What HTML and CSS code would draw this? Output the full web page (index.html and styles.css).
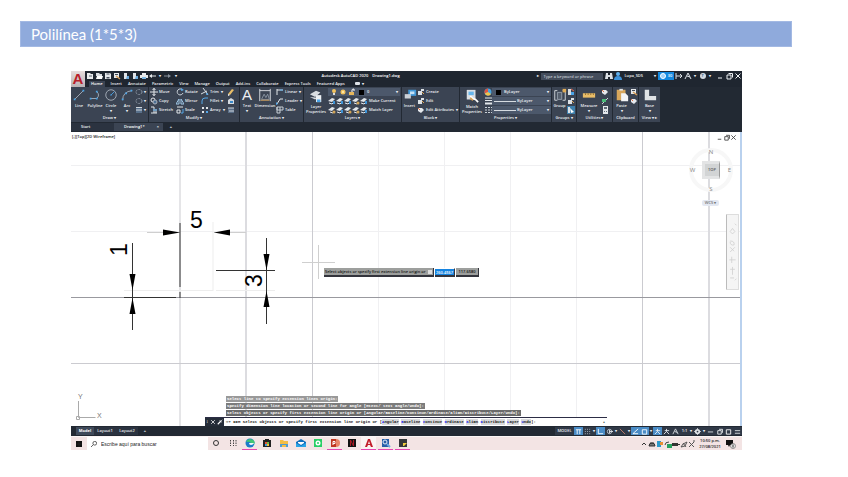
FILE: index.html
```html
<!DOCTYPE html>
<html lang="es">
<head>
<meta charset="utf-8">
<title>Polilínea</title>
<link rel="stylesheet" href="styles.css">
</head>
<body>
<svg class="defs" aria-hidden="true">
  <symbol id="file" viewBox="0 0 8 8"><path d="M1 1h3l1 1h2v5H1z" fill="#e8eaec"/><path d="M3 4h3" stroke="#59616d"/></symbol>
  <symbol id="open" viewBox="0 0 8 8"><path d="M1 1h3l1 1h2v2H1z" fill="#d8dce0"/><path d="M1 7l1-3h6L7 7z" fill="#fff"/></symbol>
  <symbol id="disk" viewBox="0 0 8 8"><path d="M1 1h5l1 1v5H1z" fill="#e4e7ea"/><path d="M2.500 1.500h3v1h-3zM2.500 5h3v1.500h-3z" fill="#444d5a"/></symbol>
  <symbol id="saveas" viewBox="0 0 8 8"><path d="M1 1h5v5H1z" fill="#e4e7ea"/><path d="M3 4l4 3" stroke="#d59c55" stroke-width="1.500"/><path d="M2 2h3v1H2z" fill="#444d5a"/></symbol>
  <symbol id="phone" viewBox="0 0 8 8"><path d="M2 1h3v6H2z" fill="#dfe2e6"/><path d="M5 4h2v3H4z" fill="#6aa9dd"/></symbol>
  <symbol id="print" viewBox="0 0 8 8"><path d="M2 1h4v6H2zM0 3h8v3H0z" fill="#e8eaec"/><path d="M2 5h4v2H2z" fill="#7db7e3"/></symbol>
  <symbol id="undo" viewBox="0 0 8 8"><path d="M0 4l3-2v1.500h4v1H3V6z" fill="#e8eaec"/></symbol>
  <symbol id="redo" viewBox="0 0 8 8"><path d="M8 4L5 2v1.500H1v1h4V6z" fill="#87909b"/></symbol>
  <symbol id="line" viewBox="0 0 16 16"><path d="M3 13L13 3" stroke="#aab2bd"/><path d="M2 13h2M12 3h2" stroke="#4aa3e6" stroke-width="2"/></symbol>
  <symbol id="pline" viewBox="0 0 16 16"><path d="M3 12h7q4-4 0-8" fill="none" stroke="#aab2bd"/><path d="M2 12h2M9 12h2M9 4h2" stroke="#4aa3e6" stroke-width="2"/></symbol>
  <symbol id="circle" viewBox="0 0 16 16"><circle cx="8" cy="8" r="6" fill="none" stroke="#aab2bd"/><path d="M8 8l4-4M7 8h2" stroke="#4aa3e6"/></symbol>
  <symbol id="arc" viewBox="0 0 16 16"><path d="M3 14Q3 4 14 3" fill="none" stroke="#aab2bd"/><path d="M2 13h2M6 6h2M12 3h2" stroke="#4aa3e6" stroke-width="2"/></symbol>
  <symbol id="ellipse" viewBox="0 0 8 8"><ellipse cx="4" cy="4" rx="3" ry="2.500" fill="none" stroke="#8e98a5" stroke-dasharray="2 1"/></symbol>
  <symbol id="hatch" viewBox="0 0 8 8"><path d="M1 1h6v6H1z" fill="#58708b"/><path d="M1 1.500h6M1 4h6" stroke="#cfd5db"/></symbol>
  <symbol id="move" viewBox="0 0 8 8"><path d="M4 0v8M0 4h8M2.500 2L4 .500 5.500 2M2.500 6L4 7.500 5.500 6" fill="none" stroke="#e3e7eb"/></symbol>
  <symbol id="copy" viewBox="0 0 8 8"><circle cx="3" cy="3" r="2" fill="none" stroke="#e3e7eb"/><circle cx="5" cy="5" r="2" fill="#4c6f92" stroke="#aab2bd"/></symbol>
  <symbol id="stretch" viewBox="0 0 8 8"><path d="M1 1h3v6M1 7h6M6 3v4" fill="none" stroke="#e3e7eb"/><path d="M3 4h4" stroke="#55a7e8"/></symbol>
  <symbol id="rotate" viewBox="0 0 8 8"><path d="M6.500 2A3 3 0 1 0 7 5" fill="none" stroke="#cbd2d9"/><path d="M5 0l3 2-3 1z" fill="#55a7e8"/></symbol>
  <symbol id="mirror" viewBox="0 0 8 8"><path d="M0 7l3-5v5zM8 7L5 2v5z" fill="none" stroke="#9fc6e6"/></symbol>
  <symbol id="scale" viewBox="0 0 8 8"><path d="M1 1h6M1 4h3v3H1z" fill="none" stroke="#e3e7eb"/><path d="M5 7h2V3" fill="none" stroke="#55a7e8"/></symbol>
  <symbol id="trim" viewBox="0 0 8 8"><path d="M2 0l3 4 2 3M0 6l6-3" fill="none" stroke="#dce1e6"/><circle cx="6" cy="6" r="1" fill="#55a7e8"/></symbol>
  <symbol id="wrench" viewBox="0 0 8 8"><path d="M1 7l4-4" stroke="#fff" stroke-width="1.500"/><path d="M7 1L5.500 2.500M4 1.500Q3.500 4 6.500 4" fill="none" stroke="#fff"/></symbol>
  <symbol id="fillet" viewBox="0 0 8 8"><path d="M1 7V4q0-3 3-3h3" fill="none" stroke="#55a7e8"/></symbol>
  <symbol id="array" viewBox="0 0 8 8"><path d="M1 1h2v2H1zM5 1h2v2H5zM1 5h2v2H1z" fill="#e3e7eb"/><path d="M5 5h2v2H5z" fill="#55a7e8"/></symbol>
  <symbol id="erase" viewBox="0 0 8 8"><path d="M1 6l4-5 2 1-4 5z" fill="#e8be68"/><path d="M1 6l2 1-2 1z" fill="#fff"/></symbol>
  <symbol id="explode" viewBox="0 0 8 8"><path d="M1 3l3-2 3 2v4H1z" fill="#d4dae0"/><path d="M3 4h3v2H3z" fill="#3989c9"/></symbol>
  <symbol id="offset" viewBox="0 0 8 8"><path d="M1 2h6v5H1z" fill="#5a6f88"/><path d="M1 2h6M2 5h5" stroke="#cdd4db"/></symbol>
  <symbol id="dim" viewBox="0 0 16 16"><path d="M2 1v14M14 1v14M2 3h12" fill="none" stroke="#e3e7eb"/><path d="M4 13l3-6 2 4 2-4 2 6z" fill="none" stroke="#8b97a5"/><path d="M3 14h10" stroke="#d9a760"/></symbol>
  <symbol id="linear" viewBox="0 0 8 8"><path d="M1 1v6M1 2h6" stroke="#e3e7eb"/><path d="M4 2h3" stroke="#55a7e8"/></symbol>
  <symbol id="leader" viewBox="0 0 8 8"><path d="M1 7l3-5h3" fill="none" stroke="#e3e7eb"/><path d="M0 8V5l2 2z" fill="#55a7e8"/></symbol>
  <symbol id="table" viewBox="0 0 8 8"><path d="M1 1h6v3H1zM1 1v6h3V1" fill="none" stroke="#c8cfd7"/></symbol>
  <symbol id="layers" viewBox="0 0 16 16"><path d="M1 6l7-4 5 2-6 5zM1 9l6 3 3-2" fill="#d9dde1"/><path d="M8 7h6v8H8z" fill="#edf1f4"/><path d="M9 12h4v3H9z" fill="#4aa3e6"/></symbol>
  <symbol id="lay" viewBox="0 0 8 8"><path d="M0 4l4-3 3 1-3 3z" fill="#e3e7eb"/><path d="M1 6l3 1 2-2" fill="none" stroke="#e3e7eb"/><path d="M5 4h2v3H5z" fill="#3f95d8"/></symbol>
  <symbol id="lay2" viewBox="0 0 8 8"><path d="M0 4l4-3 3 1-3 3z" fill="#e3e7eb"/><path d="M2 6l3 1" stroke="#e3e7eb"/><circle cx="6" cy="6" r="1.500" fill="#d3a557"/></symbol>
  <symbol id="bulb" viewBox="0 0 8 8"><circle cx="4" cy="3" r="2" fill="#f3c35d"/><path d="M3 5h2v2H3z" fill="#ddd"/></symbol>
  <symbol id="sun" viewBox="0 0 8 8"><circle cx="4" cy="4" r="2.500" fill="#f3c35d"/><circle cx="4" cy="4" r="1" fill="#fff1bb"/></symbol>
  <symbol id="lock" viewBox="0 0 8 8"><path d="M1 4h5v3H1z" fill="#e6b75c"/><path d="M4 4V2q0-1 2-1v2" fill="none" stroke="#fff"/></symbol>
  <symbol id="insert" viewBox="0 0 16 16"><path d="M6 2h9v7H6z" fill="#4297d6"/><path d="M2 7h7v5H2z" fill="#cbd1d8"/><path d="M8 4h5v3H8z" fill="#c6e2f6"/></symbol>
  <symbol id="create" viewBox="0 0 8 8"><path d="M1 3h4v4H1zM4 1h3v2H4z" fill="#dce1e6"/><path d="M5 4l2 2" stroke="#e2a44f"/></symbol>
  <symbol id="tag" viewBox="0 0 8 8"><path d="M1 2h4l2 2-3 3-3-2z" fill="#e6e9ed"/><path d="M1 2l2 2" stroke="#df7348"/></symbol>
  <symbol id="match" viewBox="0 0 16 16"><path d="M2 1h10v11H2z" fill="#dadfe4"/><path d="M4 3h6v4H4z" fill="#65b5ec"/><path d="M6 8l3 3 3 1 3 3" fill="none" stroke="#fff" stroke-width="2"/><path d="M6 10l3 3" stroke="#d99f4e" stroke-width="2"/></symbol>
  <symbol id="wheel" viewBox="0 0 8 8"><circle cx="4" cy="4" r="3.500" fill="#49a3df"/><path d="M4 4V.500A3.500 3.500 0 0 0 .800 5.500z" fill="#e05540"/><path d="M4 4L.800 5.500A3.500 3.500 0 0 0 7 6z" fill="#f1c34b"/></symbol>
  <symbol id="weights" viewBox="0 0 8 8"><path d="M1 1h7M1 3.500h7" stroke="#e3e7eb"/><path d="M1 6.500h7" stroke="#e3e7eb" stroke-width="2"/></symbol>
  <symbol id="dashes" viewBox="0 0 8 8"><path d="M1 1.500h7M1 4h7M1 6.500h7" stroke="#cbd2d9" stroke-dasharray="2 1"/></symbol>
  <symbol id="group" viewBox="0 0 16 16"><path d="M5 3H2v11h3M11 3h3v11h-3" fill="none" stroke="#dce1e6"/><path d="M5 5h5v8H5z" fill="#56606e" stroke="#9ca6b2"/><path d="M11 1h4v4h-4z" fill="#e0ac57"/></symbol>
  <symbol id="ungroup" viewBox="0 0 8 8"><path d="M1 1h3v6H1z" fill="#d8dde2"/><path d="M4 4h3v3H4z" fill="#4aa3e6"/><path d="M4 1l3 2" stroke="#e2674c"/></symbol>
  <symbol id="select" viewBox="0 0 8 8"><path d="M0 0h8v8H0z" fill="#3e7fab"/><path d="M1 1h2v6H1z" fill="#dce1e6"/><path d="M3 2l4 4-3 1z" fill="#fff"/></symbol>
  <symbol id="ruler" viewBox="0 0 16 16"><path d="M1 6h14v5H1z" fill="#e9bd67"/><path d="M4 6v2M7 6v2M10 6v2M13 6v2" stroke="#8b6a30"/></symbol>
  <symbol id="calc" viewBox="0 0 8 8"><path d="M2 0h5v8H2z" fill="#e3e7eb"/><path d="M3 1h3v2H3zM3 5h1v1H3zM5 5h1v1H5z" fill="#606a77"/></symbol>
  <symbol id="point" viewBox="0 0 8 8"><path d="M1 7l6-6" stroke="#cfd6dd"/><path d="M1 2h4v3H1z" fill="#4abb79"/></symbol>
  <symbol id="paste" viewBox="0 0 16 16"><path d="M2 2h10v12H2z" fill="#d7a65b"/><path d="M5 1h4v2H5z" fill="#dfe3e7"/><path d="M7 6h5l3 3v6H7z" fill="#f3f4f5"/></symbol>
  <symbol id="base" viewBox="0 0 16 16"><path d="M2 2h5v7h8v5H2z" fill="#e0e3e6"/></symbol>
  <symbol id="binoc" viewBox="0 0 8 8"><path d="M1 1h2v2h2V1h2l1 6H5V5H3v2H0z" fill="#dce1e6"/></symbol>
  <symbol id="user" viewBox="0 0 8 8"><circle cx="4" cy="2" r="2" fill="#5fb0ee"/><path d="M0 8q0-4 4-4t4 4z" fill="#3b92db"/></symbol>
  <symbol id="cart" viewBox="0 0 8 8"><path d="M1 1v6M1 4h5M5 2l2 2-2 2" fill="none" stroke="#dce1e6"/></symbol>
  <symbol id="a360" viewBox="0 0 8 8"><path d="M1 7l3-6 3 6M3 4l3 1" fill="none" stroke="#dce1e6"/></symbol>
  <symbol id="min" viewBox="0 0 8 8"><path d="M2 6h4" stroke="currentColor"/></symbol>
  <symbol id="max" viewBox="0 0 8 8"><path d="M2 3h4v4H2zM3.500 1.500h4v4" fill="none" stroke="currentColor"/></symbol>
  <symbol id="close" viewBox="0 0 8 8"><path d="M1.500 1.500l5 5M6.500 1.500l-5 5" stroke="currentColor"/></symbol>
  <symbol id="bars" viewBox="0 0 8 8"><path d="M1 2h6M2.500 2v5M5.500 2v5" stroke="#fff"/></symbol>
  <symbol id="dots" viewBox="0 0 8 8"><path d="M1 1.500h7M1 4h7M1 6.500h7" stroke="#b6bec7" stroke-dasharray="1 1.500"/></symbol>
  <symbol id="ortho" viewBox="0 0 8 8"><path d="M1.500 1v5.500H7" fill="none" stroke="#fff"/></symbol>
  <symbol id="polar" viewBox="0 0 8 8"><circle cx="4" cy="4" r="2.500" fill="none" stroke="#c3cad2"/><path d="M4 4h4M4 2v4" stroke="#e3e7eb"/></symbol>
  <symbol id="iso" viewBox="0 0 8 8"><path d="M1 1l6 6" stroke="#c8816f"/></symbol>
  <symbol id="angle" viewBox="0 0 8 8"><path d="M7 1L1 6.500h6" fill="none" stroke="#fff"/></symbol>
  <symbol id="snap" viewBox="0 0 8 8"><path d="M1.500 2h5v5h-5z" fill="none" stroke="#fff"/></symbol>
  <symbol id="person" viewBox="0 0 8 8"><path d="M4 1v3L1 7M4 4l3 3M2 3h5" fill="none" stroke="#e8ecf0"/></symbol>
  <symbol id="gear" viewBox="0 0 8 8"><circle cx="4" cy="4" r="2" fill="none" stroke="#dfe3e7" stroke-width="2"/><path d="M4 0v1M4 7v1M0 4h1M7 4h1" stroke="#dfe3e7"/></symbol>
  <symbol id="burger" viewBox="0 0 8 8"><path d="M1 3h6M1 6h6" stroke="#dfe3e7"/></symbol>
  <symbol id="dash" viewBox="0 0 8 8"><path d="M1 4.500h6" stroke="#dfe3e7"/></symbol>
  <symbol id="search" viewBox="0 0 8 8"><circle cx="5" cy="3" r="2.500" fill="none" stroke="#333"/><path d="M3 5L0 8" stroke="#333"/></symbol>
</svg>

<main class="slide">
  <h1 class="slide-title">Polilínea (1*5*3)</h1>

  <section class="app" aria-label="Autodesk AutoCAD 2020">
    <header class="top">
      <button class="logo" aria-label="AutoCAD">A</button>
      <div class="top-rows">
        <div class="titlebar">
          <div class="quick">
            <button aria-label="New"><svg><use href="#file"/></svg></button>
            <button aria-label="Open"><svg><use href="#open"/></svg></button>
            <button aria-label="Save"><svg><use href="#disk"/></svg></button>
            <button aria-label="Save as"><svg><use href="#saveas"/></svg></button>
            <button aria-label="Open from mobile"><svg><use href="#phone"/></svg></button>
            <button aria-label="Save to mobile"><svg><use href="#phone"/></svg></button>
            <button aria-label="Plot"><svg><use href="#print"/></svg></button>
            <button aria-label="Undo"><svg><use href="#undo"/></svg></button>
            <span class="car">▾</span>
            <button aria-label="Redo"><svg><use href="#redo"/></svg></button>
            <button aria-label="Customize">▾</button>
          </div>
          <p class="doc"><span>Autodesk AutoCAD 2020</span><span>Drawing1.dwg</span></p>
          <div class="account">
            <span class="car">▸</span>
            <input class="find" type="text" aria-label="Search" placeholder="Type a keyword or phrase">
            <button aria-label="Find"><svg><use href="#binoc"/></svg></button>
            <button class="user"><svg><use href="#user"/></svg>Lupa_SDS<span class="car">▾</span></button>
            <button class="trial" aria-label="Trial days"><i></i>30</button>
            <button aria-label="Store"><svg><use href="#cart"/></svg></button>
            <button aria-label="A360"><svg><use href="#a360"/></svg></button>
            <span class="car">▾</span>
            <button class="help" aria-label="Help"><b>?</b></button>
            <span class="car">▾</span>
            <div class="win">
              <button aria-label="Minimize"><svg><use href="#min"/></svg></button>
              <button aria-label="Restore"><svg><use href="#max"/></svg></button>
              <button aria-label="Close"><svg><use href="#close"/></svg></button>
            </div>
          </div>
        </div>
        <nav class="menu">
          <a class="on" href="#">Home</a><a href="#">Insert</a><a href="#">Annotate</a><a href="#">Parametric</a><a href="#">View</a><a href="#">Manage</a><a href="#">Output</a><a href="#">Add-ins</a><a href="#">Collaborate</a><a href="#">Express Tools</a><a href="#">Featured Apps</a><a href="#" aria-label="Ribbon display"><i class="pill"></i>▾</a>
        </nav>
      </div>
    </header>

    <div class="ribbon">
      <section class="panel draw">
        <div class="tools">
          <button class="big"><svg><use href="#line"/></svg>Line</button>
          <button class="big"><svg><use href="#pline"/></svg>Polyline</button>
          <button class="big"><svg><use href="#circle"/></svg>Circle<span>▾</span></button>
          <button class="big"><svg><use href="#arc"/></svg>Arc<span>▾</span></button>
          <div class="stack">
            <button aria-label="Rectangle"><svg><use href="#ellipse"/></svg>▾</button>
            <button aria-label="Ellipse"><svg><use href="#ellipse"/></svg>▾</button>
            <button aria-label="Hatch"><svg><use href="#hatch"/></svg>▾</button>
          </div>
        </div>
        <h2>Draw ▾</h2>
      </section>
      <section class="panel modify">
        <div class="tools">
          <div class="stack">
            <button><svg><use href="#move"/></svg>Move</button>
            <button><svg><use href="#copy"/></svg>Copy</button>
            <button><svg><use href="#stretch"/></svg>Stretch</button>
          </div>
          <div class="stack">
            <button><svg><use href="#rotate"/></svg>Rotate</button>
            <button><svg><use href="#mirror"/></svg>Mirror</button>
            <button><svg><use href="#scale"/></svg>Scale</button>
          </div>
          <div class="stack">
            <button><svg><use href="#trim"/></svg>Trim <span>▾</span></button>
            <button><svg><use href="#fillet"/></svg>Fillet <span>▾</span></button>
            <button><svg><use href="#array"/></svg>Array <span>▾</span></button>
          </div>
          <div class="stack">
            <button aria-label="Erase"><svg><use href="#erase"/></svg></button>
            <button aria-label="Explode"><svg><use href="#explode"/></svg></button>
            <button aria-label="Offset"><svg><use href="#offset"/></svg></button>
          </div>
        </div>
        <h2>Modify ▾</h2>
      </section>
      <section class="panel annotation">
        <div class="tools">
          <button class="big"><b class="glyph">A</b>Text<span>▾</span></button>
          <button class="big"><svg><use href="#dim"/></svg>Dimension</button>
          <div class="stack">
            <button><svg><use href="#linear"/></svg>Linear <span>▾</span></button>
            <button><svg><use href="#leader"/></svg>Leader <span>▾</span></button>
            <button><svg><use href="#table"/></svg>Table</button>
          </div>
        </div>
        <h2>Annotation ▾</h2>
      </section>
      <section class="panel layers">
        <div class="tools">
          <button class="big two"><svg><use href="#layers"/></svg>Layer<br>Properties</button>
          <div class="stack">
            <button class="combo"><svg><use href="#bulb"/></svg><svg><use href="#sun"/></svg><svg><use href="#lock"/></svg><i class="swatch"></i>0<span>▾</span></button>
            <div class="row">
              <button aria-label="Off"><svg><use href="#lay"/></svg></button><button aria-label="Isolate"><svg><use href="#lay"/></svg></button><button aria-label="Freeze"><svg><use href="#lay"/></svg></button><button aria-label="Lock"><svg><use href="#lay2"/></svg></button><button><svg><use href="#lay"/></svg>Make Current</button>
            </div>
            <div class="row">
              <button aria-label="On"><svg><use href="#lay2"/></svg></button><button aria-label="Unisolate"><svg><use href="#lay"/></svg></button><button aria-label="Thaw"><svg><use href="#lay2"/></svg></button><button aria-label="Unlock"><svg><use href="#lay2"/></svg></button><button><svg><use href="#lay"/></svg>Match Layer</button>
            </div>
          </div>
        </div>
        <h2>Layers ▾</h2>
      </section>
      <section class="panel block">
        <div class="tools">
          <button class="big"><svg><use href="#insert"/></svg>Insert</button>
          <div class="stack">
            <button><svg><use href="#create"/></svg>Create</button>
            <button><svg><use href="#create"/></svg>Edit</button>
            <button><svg><use href="#tag"/></svg>Edit Attributes <span>▾</span></button>
          </div>
        </div>
        <h2>Block ▾</h2>
      </section>
      <section class="panel properties">
        <div class="tools">
          <button class="big two"><svg><use href="#match"/></svg>Match<br>Properties</button>
          <div class="stack">
            <svg><use href="#wheel"/></svg>
            <svg><use href="#weights"/></svg>
            <svg><use href="#dashes"/></svg>
          </div>
          <div class="stack wide">
            <button class="combo"><i class="swatch"></i>ByLayer<span>▾</span></button>
            <button class="combo"><i class="rule"></i>ByLayer<span>▾</span></button>
            <button class="combo"><i class="rule"></i>ByLayer<span>▾</span></button>
          </div>
        </div>
        <h2>Properties ▾</h2>
      </section>
      <section class="panel groups">
        <div class="tools">
          <button class="big"><svg><use href="#group"/></svg>Group</button>
          <div class="stack">
            <button aria-label="Ungroup"><svg><use href="#ungroup"/></svg></button>
            <button aria-label="Group edit"><svg><use href="#create"/></svg></button>
            <button aria-label="Group selection"><svg><use href="#select"/></svg></button>
          </div>
        </div>
        <h2>Groups ▾</h2>
      </section>
      <section class="panel utilities">
        <div class="tools">
          <button class="big"><svg><use href="#ruler"/></svg>Measure<span>▾</span></button>
          <div class="stack">
            <button aria-label="Quick select"><svg><use href="#tag"/></svg></button>
            <button aria-label="Point"><svg><use href="#point"/></svg></button>
            <button aria-label="Calculator"><svg><use href="#calc"/></svg></button>
          </div>
        </div>
        <h2>Utilities ▾</h2>
      </section>
      <section class="panel clipboard">
        <div class="tools">
          <button class="big"><svg><use href="#paste"/></svg>Paste<span>▾</span></button>
          <div class="stack">
            <button aria-label="Cut"><svg><use href="#saveas"/></svg></button>
            <button aria-label="Copy clip"><svg><use href="#tag"/></svg></button>
          </div>
        </div>
        <h2>Clipboard</h2>
      </section>
      <section class="panel view">
        <div class="tools">
          <button class="big"><svg><use href="#base"/></svg>Base<span>▾</span></button>
        </div>
        <h2>View ▾ ▸</h2>
      </section>
    </div>

    <nav class="files">
      <a href="#">Start</a>
      <a class="on" href="#">Drawing1*<span>×</span></a>
      <button aria-label="New drawing">+</button>
    </nav>

    <div class="canvas">
      <svg class="drawing" viewBox="71 132 671 294" preserveAspectRatio="xMinYMin slice" role="img" aria-label="Drawing">
        <g class="grid">
          <path class="faint" d="M378.500 132v294M444.500 132v294M510.500 132v294M576.500 132v294M71 165.500h671M71 231.500h671"/>
          <path class="mid" d="M246 132v294M709 132v294"/>
          <path class="firm" d="M180 132v294M312.500 132v294M642.500 132v294M71 363.500h671"/>
          <path class="axis" d="M71 297.500h671"/>
        </g>
        <path class="ghost" d="M213 222v69M124 290.500h89M216 290.500h59"/>
        <path class="soft" d="M147 232.500h33M214 232.500h32M302 262.500h33M318.500 245v34"/>
        <path class="ink" d="M180 223v64M180 292v6M124 297.500h52M132.500 243v87M216 270.500h59M266.500 238v86"/>
        <path class="arrow" d="M180 232.500l-17-3v6zM214 232.500l16-3v6zM132.500 290l-3-16h6zM132.500 298l-3 16h6zM266.500 270l-3-16h6zM266.500 291l-3 16h6z"/>
        <text class="dimension" x="190" y="228">5</text>
        <text class="dimension" transform="translate(127 256) rotate(-90)">1</text>
        <text class="dimension" transform="translate(262 287) rotate(-90)">3</text>
        <path class="ucs" d="M78.500 401v16.500h17M76.500 416.500h3v3h-3z"/>
        <text class="axis-name" x="78" y="399">Y</text>
        <text class="axis-name" x="97" y="418">X</text>
      </svg>
      <p class="viewport">[-][Top][2D Wireframe]</p>
      <div class="viewport-win">
        <button aria-label="Minimize drawing"><svg><use href="#min"/></svg></button>
        <button aria-label="Restore drawing"><svg><use href="#max"/></svg></button>
        <button aria-label="Close drawing"><svg><use href="#close"/></svg></button>
      </div>
      <div class="cube">
        <span class="n">N</span><span class="w">W</span><button>TOP</button><span class="e">E</span><span class="s">S</span>
      </div>
      <button class="wcs">WCS ▾</button>
      <div class="navbar">
        <svg viewBox="0 0 14 76"><path d="M10 2l2 2M4 12l3-4 3 4-3 3zM4 24q6 0 5 5-5 1-5-4M4 38l6-6M4 32l5 5M6 44v8M3 48h8M4 60h6M7 57v10M4 71h5M10 74l2-2" /></svg>
      </div>
      <div class="prompt">
        <span class="ask">Select objects or specify first extension line origin or<i></i></span>
        <input type="text" aria-label="X" value="260.4567">
        <span class="second">117.6580</span>
      </div>
      <div class="history">
        <p>Select line to specify extension lines origin:</p>
        <p>Specify dimension line location or second line for angle [Mtext/ text angle/Undo]:</p>
        <p>Select objects or specify first extension line origin or [Angular/Baseline/Continue/Ordinate/aliGn/Distribute/Layer/Undo]:</p>
      </div>
      <div class="command">
        <div class="grip"><span>⁞</span><svg><use href="#close"/></svg><svg><use href="#wrench"/></svg></div>
        <p>⌨▾ DIM Select objects or specify first extension line origin or [<a href="#">Angular</a> <a href="#">Baseline</a> <a href="#">Continue</a> <a href="#">Ordinate</a> <a href="#">aliGn</a> <a href="#">Distribute</a> <a href="#">Layer</a> <a href="#">Undo</a>]:</p>
        <button aria-label="Expand">▴</button>
      </div>
    </div>

    <footer class="status">
      <nav class="layouts"><a class="on" href="#">Model</a><a href="#">Layout1</a><a href="#">Layout2</a><button aria-label="New layout">+</button></nav>
      <div class="modes">
        <button class="word">MODEL</button>
        <button class="lit" aria-label="Grid"><svg><use href="#bars"/></svg></button>
        <button aria-label="Snap"><svg><use href="#dots"/></svg></button><span class="car">▾</span>
        <button class="lit" aria-label="Ortho"><svg><use href="#ortho"/></svg></button>
        <button aria-label="Polar"><svg><use href="#polar"/></svg></button><span class="car">▾</span>
        <button aria-label="Isodraft"><svg><use href="#iso"/></svg></button><span class="car">▾</span>
        <button class="lit" aria-label="Tracking"><svg><use href="#angle"/></svg></button>
        <button class="lit" aria-label="Object snap"><svg><use href="#snap"/></svg></button><span class="car">▾</span>
        <button class="lit" aria-label="Annotation visibility"><svg><use href="#person"/></svg></button>
        <button aria-label="Auto scale"><svg><use href="#person"/></svg></button>
        <button aria-label="Scale"><svg><use href="#a360"/></svg></button>
        <button>1:1</button><span class="car">▾</span>
        <button aria-label="Workspace"><svg><use href="#gear"/></svg></button><span class="car">▾</span>
        <button aria-label="Monitor"><svg><use href="#dash"/></svg></button>
        <button aria-label="Isolate objects"><svg><use href="#max"/></svg></button>
        <button aria-label="Clean screen"><svg><use href="#snap"/></svg></button>
        <button aria-label="Customization"><svg><use href="#burger"/></svg></button>
      </div>
    </footer>

    <div class="taskbar">
      <button class="start" aria-label="Inicio"><svg viewBox="0 0 8 8"><path d="M1 1h6v6H1z" fill="#111"/><path d="M4 1v6M1 4h6" stroke="#333" stroke-width=".4"/></svg></button>
      <label class="search"><svg><use href="#search"/></svg><input type="text" placeholder="Escribe aquí para buscar"></label>
      <div class="apps">
        <button aria-label="Cortana"><svg viewBox="0 0 10 10"><circle cx="5" cy="5" r="2.500" fill="none" stroke="#333"/></svg></button>
        <button aria-label="Vista de tareas"><svg viewBox="0 0 10 10"><path d="M2.500 2v6M5.500 2v6M8 2v6" stroke="#444" stroke-dasharray="1.500 1"/></svg></button>
        <button class="run" aria-label="Edge"><svg viewBox="0 0 10 10"><circle cx="5" cy="5" r="4.500" fill="#1c7bc9"/><path d="M1 4Q3 0 7 1.500T9 6H5q2-3-4-2z" fill="#42c774"/><path d="M4 5h5q-1 2-3 2T4 5z" fill="#f3f7fa"/></svg></button>
        <button aria-label="Store"><svg viewBox="0 0 10 10"><path d="M1 2h8v7H1zM3 1h4v1H3z" fill="#222"/><path d="M3 4h2v2H3z" fill="#e65037"/><path d="M5 4h2v2H5z" fill="#71b542"/><path d="M3 6h2v2H3z" fill="#3d9bdd"/><path d="M5 6h2v2H5z" fill="#f3bf36"/></svg></button>
        <button aria-label="Explorador"><svg viewBox="0 0 10 10"><path d="M1 2h3l1 1h4v6H1z" fill="#f2bd45"/><path d="M1 6h8v3H7V7H3v2H1z" fill="#4e9bd1"/></svg></button>
        <button aria-label="Correo"><svg viewBox="0 0 10 10"><path d="M0 4l5-3 5 3v5H0z" fill="#0f6fbd"/><path d="M2 4h6v1L5 7 2 5z" fill="#fff"/><path d="M0 5l5 3 5-3v4H0z" fill="#2ba4e6"/></svg></button>
        <button aria-label="WhatsApp"><svg viewBox="0 0 10 10"><path d="M1 1h8v8H1z" fill="#29cf65"/><circle cx="5" cy="5" r="2.500" fill="#fff"/><circle cx="5" cy="5" r="1" fill="#29cf65"/></svg></button>
        <button class="run" aria-label="PowerPoint"><svg viewBox="0 0 10 10"><circle cx="6" cy="5" r="4" fill="#e88568"/><path d="M1 1h5v8H1z" fill="#bf3521"/><path d="M3 7V3.500h2v2H3" fill="none" stroke="#fff"/></svg></button>
        <button aria-label="Netflix"><svg viewBox="0 0 10 10"><path d="M1 1h8v8H1z" fill="#111"/><path d="M3.500 8V2l3 6V2" fill="none" stroke="#a71922"/></svg></button>
        <button class="run active" aria-label="AutoCAD"><svg viewBox="0 0 10 10"><path d="M1 9l3-8h2l3 8H7L6 7H4L3 9zM5 3L4 6h2z" fill="#c21e2b"/></svg></button>
        <button class="run" aria-label="Word"><svg viewBox="0 0 10 10"><path d="M1 1h7v8H1z" fill="#285fa8"/><circle cx="4" cy="4" r="2" fill="none" stroke="#e7effa"/><path d="M6 6l3 3" stroke="#6da7df" stroke-width="2"/></svg></button>
        <button class="run" aria-label="Notas"><svg viewBox="0 0 10 10"><path d="M1 1h8v8H1z" fill="#343638"/><path d="M5 5h4L6 8H5z" fill="#f1cb3d"/></svg></button>
      </div>
      <div class="tray">
        <svg viewBox="0 0 8 8"><path d="M2 5l2-2 2 2" fill="none" stroke="#333"/></svg>
        <svg viewBox="0 0 8 8"><path d="M1 6q0-3 3-3t3 3zM2 3h4" fill="#777" stroke="#333"/></svg>
        <svg viewBox="0 0 8 8"><path d="M1 1h4v6H1z" fill="#2d99c9"/><path d="M4 2h3v3H4z" fill="#e79033"/></svg>
        <svg viewBox="0 0 8 8"><path d="M1 5q0-3 4-3" fill="none" stroke="#444"/><path d="M3 4h5v4H3z" fill="#24a05c"/></svg>
        <svg viewBox="0 0 8 8"><path d="M0 3h6v3H0zM6 4h2v1H6z" fill="#333"/></svg>
        <svg viewBox="0 0 8 8"><path d="M1 7l2-3 4-2-2 4zM3 3l3 4" fill="none" stroke="#555"/></svg>
        <svg viewBox="0 0 8 8"><path d="M1 2l5 5M6 2L1 7M5 1h2" stroke="#555"/></svg>
        <p class="clock">10:50 p.m.<br>27/08/2021</p>
        <button class="notice" aria-label="Notificaciones"><svg viewBox="0 0 10 10"><path d="M0 1h7v5H4L3 8 2 6H0z" fill="#111"/><circle cx="7" cy="7" r="2.500" fill="#eee" stroke="#555" stroke-width=".6"/><path d="M7 5.500v3" stroke="#333"/></svg></button>
      </div>
    </div>
  </section>
</main>
</body>
</html>
```
FILE: styles.css
```css
* { box-sizing: border-box; }
body { margin: 0; background: #fff; font-family: "Open Sans", "Liberation Sans", sans-serif; font-size: 4px; line-height: 6px; }
h1, h2, p { margin: 0; font-weight: inherit; }
a { color: inherit; text-decoration: none; }
button, input { border: 0; margin: 0; padding: 0; background: none; color: inherit; font: inherit; border-radius: 0; white-space: nowrap; }
svg { display: block; flex: none; width: 8px; height: 8px; }
.defs { position: absolute; width: 0; height: 0; }

.slide { padding: 21px 56px 0 20px; }
.slide-title { height: 26px; padding-left: 10px; border: 1px solid #a3b9e3; background: #8faadc; color: #fff; font: 15px/24px Lato, sans-serif; }
.app { margin: 24px 50px 0 51px; color: #eef1f4; font-weight: 600; }

.top { display: flex; height: 16px; background: #1f2630; }
.logo { width: 14px; background: linear-gradient(#e6dcdc, #b9b2b4); color: #b92029; font: bold 15px/16px "Liberation Sans", sans-serif; }
.top-rows { flex: 1; min-width: 0; }
.titlebar { display: flex; align-items: center; height: 10px; }
.quick { display: flex; align-items: center; gap: 1px; flex: none; width: 36%; padding-left: 1px; }
.quick button { width: 8px; }
.doc { display: flex; gap: 4px; color: #fff; white-space: nowrap; }
.account { display: flex; align-items: center; justify-content: flex-end; flex: 1; gap: 1px; }
.find { width: 62px; height: 7px; padding: 0 2px; margin-right: 1px; background: #444d5c; }
.find::placeholder { color: #c0c7cf; opacity: 1; }
.user { display: flex; align-items: center; gap: 2px; }
.user .car { margin-left: 8px; }
.car { width: 4px; flex: none; text-align: center; }
.trial { display: flex; align-items: center; justify-content: center; gap: 2px; width: 16px; height: 8px; background: #1589df; color: #fff; }
.trial i { width: 6px; height: 6px; border: 1px solid #fff; border-radius: 50%; background: #9fd0f6; }
.help { width: 9px; }
.help b { display: block; width: 6px; height: 6px; margin: auto; border-radius: 50%; background: #d3dae2; color: #26507c; }
.win { display: flex; gap: 1px; margin-left: 3px; }
.menu { display: flex; gap: 6px; height: 6px; padding-left: 4px; line-height: 6px; white-space: nowrap; }
.menu .on { padding: 0 2px; background: #3b4453; color: #fff; }
.pill { display: inline-block; width: 5px; height: 3px; margin: 0 2px 0 4px; border-radius: 1px; background: #dfe3e8; }

.ribbon { display: flex; height: 35px; gap: 1px; background: #222933; overflow: hidden; }
.panel { display: flex; flex-direction: column; flex: none; background: #3b4453; }
.panel h2 { height: 8px; font-size: 4px; line-height: 8px; text-align: center; white-space: nowrap; }
.tools { display: flex; height: 27px; padding-top: 1px; }
.big { display: flex; flex-direction: column; align-items: center; flex: none; width: 17px; line-height: 5px; }
.big svg { width: 14px; height: 14px; margin-bottom: 1px; }
.big.two { width: 24px; display: block; text-align: center; }
.big.two svg { margin: 0 auto 1px; }
.glyph { height: 14px; margin-bottom: 1px; color: #eceff2; font: 15px/14px "Liberation Sans", sans-serif; }
.stack { display: grid; grid-template-rows: repeat(3, 8px); row-gap: 1px; align-content: start; }
.stack button { display: flex; align-items: center; gap: 1px; }
.stack span { margin-left: 1px; }
.draw { width: 77px; }
.draw .big { width: 16px; }
.modify { width: 90px; }
.modify .tools { display: grid; grid-template-columns: 26px 25px 26px 10px; padding-left: 1px; }
.annotation { width: 63px; }
.annotation .big { width: 14px; }
.annotation .big + .big { width: 22px; }
.layers { width: 97px; }
.combo { width: 100%; background: #4c586b; padding: 0 2px; }
.stack .combo span { margin-left: auto; }
.layers .stack { width: 72px; }
.row { display: flex; }
.swatch { width: 5px; height: 5px; margin: 0 2px; background: #000; }
.rule { width: 22px; height: 1px; background: #d6dbe0; }
.block { width: 57px; }
.block .big { width: 15px; }
.properties { width: 91px; }
.properties .tools .wide { width: 59px; }
.groups { width: 24px; }
.groups .big { width: 15px; }
.utilities { width: 35px; }
.utilities .big { width: 24px; }
.clipboard { width: 25px; }
.view { width: 21px; }
.view .big { width: 21px; }

.files { display: flex; align-items: center; height: 10px; background: #222933; line-height: 8px; }
.files a { width: 43px; height: 8px; padding-left: 10px; background: #2b3340; }
.files .on { display: flex; justify-content: space-between; width: 49px; padding-right: 4px; background: #3b4453; color: #fff; }
.files button { width: 16px; }

.canvas { position: relative; height: 294px; overflow: hidden; border-right: 2px solid #b9d1ee; background: #fff; color: #444; }
.drawing { width: 671px; height: 294px; min-width: 100%; }
.drawing path { fill: none; }
.drawing .faint { stroke: #f0f0f2; }
.drawing .mid { stroke: #dcdce0; stroke-width: 2; }
.drawing .firm { stroke: #cbcbd0; }
.drawing .axis { stroke: #99999f; }
.drawing .ghost { stroke: #ededed; }
.drawing .soft { stroke: #cfcfcf; }
.drawing .ink { stroke: #333; }
.drawing .arrow { fill: #000; }
.drawing .ucs { stroke: #aaa; }
.dimension { fill: #000; font: 23px "Liberation Sans", sans-serif; }
.axis-name { fill: #777; font: 7px "Liberation Sans", sans-serif; }
.viewport { position: absolute; left: 1px; top: 2px; color: #111; }
.viewport-win { position: absolute; right: 3px; top: 2px; display: flex; }
.viewport-win svg { width: 7px; height: 7px; }
.cube { position: absolute; right: 1px; top: 10px; display: grid; grid-template: 19px 18px 19px / 19px 18px 19px; place-items: center; color: #888; font-size: 6px; font-weight: normal; }
.cube::before { content: ""; position: absolute; inset: 6px; border: 4px solid #f7f7f7; border-radius: 50%; }
.cube span { z-index: 1; }
.cube .n, .cube .s { grid-column: 2; }
.cube .w { grid-column: 1; grid-row: 2; }
.cube button { grid-column: 2; grid-row: 2; z-index: 1; width: 18px; height: 18px; border: 3px solid #e3e4e5; border-right: 1px solid #999; background: #d2d4d5; color: #555; font-size: 4px; font-weight: 600; }
.cube .e { grid-column: 3; grid-row: 2; }
.cube .s { grid-row: 3; }
.wcs { position: absolute; right: 21px; top: 68px; width: 17px; height: 6px; border-radius: 2px; background: #e3e8f2; color: #777; }
.navbar { position: absolute; right: 1px; top: 82px; border: 1px solid #ddd; border-left-color: #bbb; border-radius: 1px; background: #f5f5f5; }
.navbar svg { width: 11px; height: 74px; }
.navbar path { fill: none; stroke: #cfcfcf; }
.prompt { position: absolute; left: 253px; top: 136px; display: flex; gap: 1px; line-height: 7px; }
.prompt > * { height: 9px; border-bottom: 2px solid #33343c; border-right: 1px solid #33343c; }
.ask, .second { background: #9d9f9d; color: #111; padding: 0 1px; white-space: nowrap; }
.ask { display: flex; align-items: center; justify-content: space-between; width: 110px; }
.ask i { width: 4px; height: 4px; background: #ddd; }
.prompt input { width: 20px; border-top: 1px solid #fff; background: #1684e0; color: #fff; text-align: center; }
.second { width: 23px; text-align: center; }
.history { position: absolute; left: 155px; bottom: 10px; display: grid; justify-items: start; gap: 1px; color: #fff; font: bold 4px/6px "Liberation Mono", monospace; white-space: nowrap; }
.history p { padding: 0 1px; background: #6b6b6b; }
.history p:first-child { background: #999; }
.history p:nth-child(2) { background: #7c7c7c; }
.command { position: absolute; left: 134px; bottom: 0; display: flex; width: 402px; height: 9px; border-top: 1px solid #2c2d45; background: #fff; color: #111; font: bold 4px/8px "Liberation Mono", monospace; white-space: nowrap; }
.grip { display: flex; align-items: center; justify-content: space-between; width: 19px; padding: 0 1px; margin-right: 2px; background: #262d39; color: #fff; }
.grip svg { width: 6px; height: 6px; }
.command p { flex: 1; }
.command a { display: inline-block; height: 6px; line-height: 6px; background: #d9dadd; }
.command a::first-letter { color: #22e; }
.command button { width: 6px; }

.status { display: flex; justify-content: space-between; align-items: center; height: 10px; background: #222933; }
.layouts { display: flex; padding-left: 5px; line-height: 8px; }
.layouts a { width: 22px; text-align: center; background: #2b3340; }
.layouts .on { width: 18px; background: #3f4a5a; color: #fff; font-weight: bold; }
.layouts button { width: 14px; }
.modes { display: flex; align-items: center; height: 8px; background: #303947; }
.modes button { display: grid; place-items: center; width: 9px; height: 8px; }
.modes svg { width: 7px; height: 7px; }
.modes .word { width: 19px; }
.modes .lit { background: #4a8cc6; }

.taskbar { display: flex; height: 14px; border-top: 1px solid #fbf5f5; background: #f3e4e4; color: #222; }
.start { display: grid; place-items: center; width: 16px; }
.search { display: flex; align-items: center; gap: 4px; width: 121px; padding-left: 4px; background: #fff; }
.search svg { width: 6px; height: 6px; }
.search input { flex: 1; min-width: 0; font: 5px/8px "Liberation Sans", sans-serif; }
.search input::placeholder { color: #222; opacity: 1; }
.apps { display: flex; flex: 1; gap: 2px; }
.apps button { display: grid; place-items: center; width: 15px; border-bottom: 1px solid transparent; }
.apps svg { width: 10px; height: 10px; }
.apps .run { border-bottom-color: #e545b0; }
.apps .active { background: #faf3f3; }
.tray { display: flex; align-items: center; padding-right: 6px; }
.clock { margin-left: 2px; width: 24px; text-align: center; white-space: nowrap; }
.notice { margin-left: 4px; }
.notice svg { width: 10px; height: 10px; }
```
